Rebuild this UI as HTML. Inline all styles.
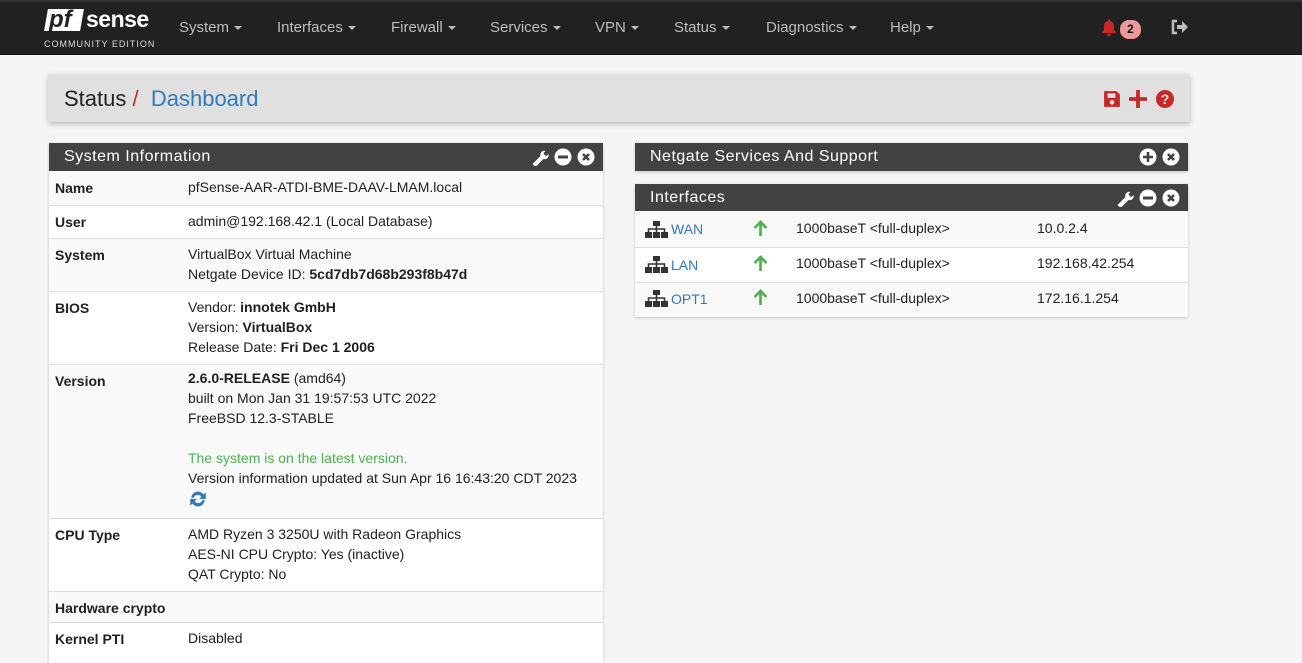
<!DOCTYPE html>
<html><head><meta charset="utf-8"><style>
*{box-sizing:border-box;margin:0;padding:0}
body{width:1302px;height:655px;overflow:hidden;background:#f5f5f5;font-family:"Liberation Sans",sans-serif;font-size:14px;color:#212121;position:relative}
.nav{position:absolute;left:0;top:0;width:1302px;height:55px;background:#212121;border-top:2px solid #333;border-bottom:1px solid #111}
.nav .m{position:absolute;top:17px;color:#bdbdbd;font-size:15px}
.car{display:inline-block;width:0;height:0;border-left:4px solid transparent;border-right:4px solid transparent;border-top:4px solid #bdbdbd;vertical-align:middle;margin-left:5px}
.bc{position:absolute;left:48px;top:74px;width:1142px;height:48px;background:#e0e0e0;box-shadow:0 2px 5px rgba(0,0,0,.25)}
.panel{position:absolute;background:#fff;box-shadow:0 1px 3px rgba(0,0,0,.2)}
.ph{background:#424242;color:#fff;font-size:16px;letter-spacing:.5px;height:28px;line-height:28px;padding-left:15px;position:relative}
.icons{position:absolute;right:8px;top:5px;display:flex;gap:5px}
.r{position:absolute;left:0;width:100%;border-top:1px solid #ddd}
.l{position:absolute;left:6px;top:8px;font-weight:bold}
.v{position:absolute;left:139px;top:8px;line-height:20px}
b{font-weight:bold}
.a{color:#337ab7}
</style></head><body>
<div class="nav">
 <div style="position:absolute;left:46px;top:7px;width:105px;height:22px">
  <span style="position:absolute;left:0;top:0;width:36px;height:22px;background:#fff;transform:skewX(-10deg)"></span>
  <span style="position:absolute;left:3px;top:-3px;font-size:24px;font-weight:bold;font-style:italic;color:#212121">pf</span>
  <span style="position:absolute;left:40px;top:-3px;font-size:23px;font-weight:bold;color:#fff;letter-spacing:-.5px">sense</span>
 </div>
 <div style="position:absolute;left:44px;top:37px;font-size:9px;color:#ddd;letter-spacing:1px">COMMUNITY EDITION</div>
 <span class="m" style="left:179px">System<span class="car"></span></span>
 <span class="m" style="left:277px">Interfaces<span class="car"></span></span>
 <span class="m" style="left:391px">Firewall<span class="car"></span></span>
 <span class="m" style="left:490px">Services<span class="car"></span></span>
 <span class="m" style="left:595px">VPN<span class="car"></span></span>
 <span class="m" style="left:674px">Status<span class="car"></span></span>
 <span class="m" style="left:766px">Diagnostics<span class="car"></span></span>
 <span class="m" style="left:890px">Help<span class="car"></span></span>
 <svg style="position:absolute;left:1101px;top:16px" width="16" height="18" viewBox="0 0 16 18"><path d="M8 1a1 1 0 0 1 1 1v1c3 .5 4 3 4 5v4l2 2v1H1v-1l2-2V8c0-2 1-4.5 4-5V2a1 1 0 0 1 1-1z M6 16h4a2 2 0 0 1-4 0z" fill="#c62828"/></svg>
 <span style="position:absolute;left:1120px;top:18px;width:21px;height:19px;border-radius:9px;background:#ef9a9a;color:#111;font-size:12px;font-weight:bold;text-align:center;line-height:19px">2</span>
 <svg style="position:absolute;left:1171px;top:17px" width="18" height="16" viewBox="0 0 18 16"><path d="M6 2H2v12h4" fill="none" stroke="#bdbdbd" stroke-width="2.5"/><path d="M6 6h5V2l6 6-6 6v-4H6z" fill="#bdbdbd"/></svg>
</div>
<div class="bc">
 <span style="position:absolute;left:16px;top:12px;font-size:22px;color:#212121">Status <span style="color:#c62828">/</span> &nbsp;<span class="a">Dashboard</span></span>
 <svg style="position:absolute;left:1055px;top:16px" width="18" height="18" viewBox="0 0 16 16"><path d="M1 1h11l3 3v11H1z" fill="#c62828"/><rect x="4" y="3" width="7" height="4" fill="#e0e0e0"/><circle cx="8" cy="11" r="2" fill="#e0e0e0"/></svg>
 <svg style="position:absolute;left:1081px;top:16px" width="18" height="18" viewBox="0 0 16 16"><path d="M6.3 0h3.4v6.3H16v3.4H9.7V16H6.3V9.7H0V6.3h6.3z" fill="#c62828"/></svg>
 <svg style="position:absolute;left:1108px;top:16px" width="18" height="18" viewBox="0 0 18 18"><circle cx="9" cy="9" r="9" fill="#c62828"/><text x="9" y="14" font-size="14" font-weight="bold" fill="#e0e0e0" text-anchor="middle" font-family="Liberation Sans">?</text></svg>
</div>

<div class="panel" style="left:49px;top:143px;width:554px;height:520px;background:#f9f9f9">
 <div class="ph">System Information
  <div class="icons">
   <svg width="19" height="18" viewBox="0 0 18 18"><path d="M2 16l8-8a4 4 0 0 1 5-5l-2 2 1 2 2 1 2-2a4 4 0 0 1-5 5l-8 8z" fill="#fff"/></svg>
   <svg width="18" height="18" viewBox="0 0 18 18"><circle cx="9" cy="9" r="8.5" fill="#fff"/><rect x="4" y="7.5" width="10" height="3" fill="#424242"/></svg>
   <svg width="18" height="18" viewBox="0 0 18 18"><circle cx="9" cy="9" r="8.5" fill="#fff"/><path d="M6 6l6 6M12 6l-6 6" stroke="#424242" stroke-width="2.6"/></svg>
  </div>
 </div>
 <div class="r" style="top:29px;height:33px;background:#f9f9f9;border-top:0"><span class="l">Name</span><span class="v" style="top:5px">pfSense-AAR-ATDI-BME-DAAV-LMAM.local</span></div>
 <div class="r" style="top:62px;height:33px;background:#fff"><span class="l">User</span><span class="v" style="top:5px">admin@192.168.42.1 (Local Database)</span></div>
 <div class="r" style="top:95px;height:53px;background:#f9f9f9"><span class="l">System</span><span class="v" style="top:5px">VirtualBox Virtual Machine<br>Netgate Device ID: <b>5cd7db7d68b293f8b47d</b></span></div>
 <div class="r" style="top:148px;height:73px;background:#fff"><span class="l">BIOS</span><span class="v" style="top:5px">Vendor: <b>innotek GmbH</b><br>Version: <b>VirtualBox</b><br>Release Date: <b>Fri Dec 1 2006</b></span></div>
 <div class="r" style="top:221px;height:154px;background:#f9f9f9"><span class="l">Version</span><span class="v" style="top:3px"><b>2.6.0-RELEASE</b> (amd64)<br>built on Mon Jan 31 19:57:53 UTC 2022<br>FreeBSD 12.3-STABLE<br><br><span style="color:#4caf50">The system is on the latest version.</span><br>Version information updated at Sun Apr 16 16:43:20 CDT 2023<br>
 <svg width="20" height="20" viewBox="0 0 18 18" style="margin-top:1px"><path d="M3 8a6 6 0 0 1 11-3l2-2v6h-6l2-2a4 4 0 0 0-7 1z M15 10a6 6 0 0 1-11 3l-2 2V9h6l-2 2a4 4 0 0 0 7-1z" fill="#337ab7"/></svg></span></div>
 <div class="r" style="top:375px;height:73px;background:#fff"><span class="l">CPU Type</span><span class="v" style="top:5px">AMD Ryzen 3 3250U with Radeon Graphics<br>AES-NI CPU Crypto: Yes (inactive)<br>QAT Crypto: No</span></div>
 <div class="r" style="top:448px;height:31px;background:#f9f9f9"><span class="l">Hardware crypto</span></div>
 <div class="r" style="top:479px;height:40px;background:#fff"><span class="l">Kernel PTI</span><span class="v" style="top:5px">Disabled</span></div>
</div>

<div class="panel" style="left:635px;top:143px;width:553px;height:28px">
 <div class="ph">Netgate Services And Support
  <div class="icons">
   <svg width="18" height="18" viewBox="0 0 18 18"><circle cx="9" cy="9" r="8.5" fill="#fff"/><path d="M9 4v10M4 9h10" stroke="#424242" stroke-width="2.6"/></svg>
   <svg width="18" height="18" viewBox="0 0 18 18"><circle cx="9" cy="9" r="8.5" fill="#fff"/><path d="M6 6l6 6M12 6l-6 6" stroke="#424242" stroke-width="2.6"/></svg>
  </div></div>
</div>
<div class="panel" style="left:635px;top:184px;width:553px;height:133px">
 <div class="ph" style="height:27px;line-height:27px">Interfaces
  <div class="icons">
   <svg width="19" height="18" viewBox="0 0 18 18"><path d="M2 16l8-8a4 4 0 0 1 5-5l-2 2 1 2 2 1 2-2a4 4 0 0 1-5 5l-8 8z" fill="#fff"/></svg>
   <svg width="18" height="18" viewBox="0 0 18 18"><circle cx="9" cy="9" r="8.5" fill="#fff"/><rect x="4" y="7.5" width="10" height="3" fill="#424242"/></svg>
   <svg width="18" height="18" viewBox="0 0 18 18"><circle cx="9" cy="9" r="8.5" fill="#fff"/><path d="M6 6l6 6M12 6l-6 6" stroke="#424242" stroke-width="2.6"/></svg>
  </div></div>
 <div class="r" style="top:28px;height:35px;background:#f9f9f9;border-top:0">
  <svg style="position:absolute;left:10px;top:9px" width="23" height="17" viewBox="0 0 23 17"><rect x="8" y="0" width="7" height="5" fill="#333"/><path d="M11.5 5v3M3.5 11V8h16v3M11.5 8v3" stroke="#333" stroke-width="1.6" fill="none"/><rect x="0" y="11" width="7" height="6" fill="#333"/><rect x="8" y="11" width="7" height="6" fill="#333"/><rect x="16" y="11" width="7" height="6" fill="#333"/></svg>
  <span class="a" style="position:absolute;left:36px;top:9px">WAN</span>
  <svg style="position:absolute;left:118px;top:8px" width="15" height="17" viewBox="0 0 15 17"><path d="M7.5 16V2M1.5 8l6-6 6 6" stroke="#4caf50" stroke-width="2.6" fill="none"/></svg>
  <span style="position:absolute;left:161px;top:8px">1000baseT &lt;full-duplex&gt;</span><span style="position:absolute;left:402px;top:8px">10.0.2.4</span></div>
 <div class="r" style="top:63px;height:35px;background:#fff">
  <svg style="position:absolute;left:10px;top:8px" width="23" height="17" viewBox="0 0 23 17"><rect x="8" y="0" width="7" height="5" fill="#333"/><path d="M11.5 5v3M3.5 11V8h16v3M11.5 8v3" stroke="#333" stroke-width="1.6" fill="none"/><rect x="0" y="11" width="7" height="6" fill="#333"/><rect x="8" y="11" width="7" height="6" fill="#333"/><rect x="16" y="11" width="7" height="6" fill="#333"/></svg>
  <span class="a" style="position:absolute;left:36px;top:9px">LAN</span>
  <svg style="position:absolute;left:118px;top:7px" width="15" height="17" viewBox="0 0 15 17"><path d="M7.5 16V2M1.5 8l6-6 6 6" stroke="#4caf50" stroke-width="2.6" fill="none"/></svg>
  <span style="position:absolute;left:161px;top:7px">1000baseT &lt;full-duplex&gt;</span><span style="position:absolute;left:402px;top:7px">192.168.42.254</span></div>
 <div class="r" style="top:98px;height:35px;background:#f9f9f9">
  <svg style="position:absolute;left:10px;top:7px" width="23" height="17" viewBox="0 0 23 17"><rect x="8" y="0" width="7" height="5" fill="#333"/><path d="M11.5 5v3M3.5 11V8h16v3M11.5 8v3" stroke="#333" stroke-width="1.6" fill="none"/><rect x="0" y="11" width="7" height="6" fill="#333"/><rect x="8" y="11" width="7" height="6" fill="#333"/><rect x="16" y="11" width="7" height="6" fill="#333"/></svg>
  <span class="a" style="position:absolute;left:36px;top:8px">OPT1</span>
  <svg style="position:absolute;left:118px;top:6px" width="15" height="17" viewBox="0 0 15 17"><path d="M7.5 16V2M1.5 8l6-6 6 6" stroke="#4caf50" stroke-width="2.6" fill="none"/></svg>
  <span style="position:absolute;left:161px;top:7px">1000baseT &lt;full-duplex&gt;</span><span style="position:absolute;left:402px;top:7px">172.16.1.254</span></div>
</div>
</body></html>
